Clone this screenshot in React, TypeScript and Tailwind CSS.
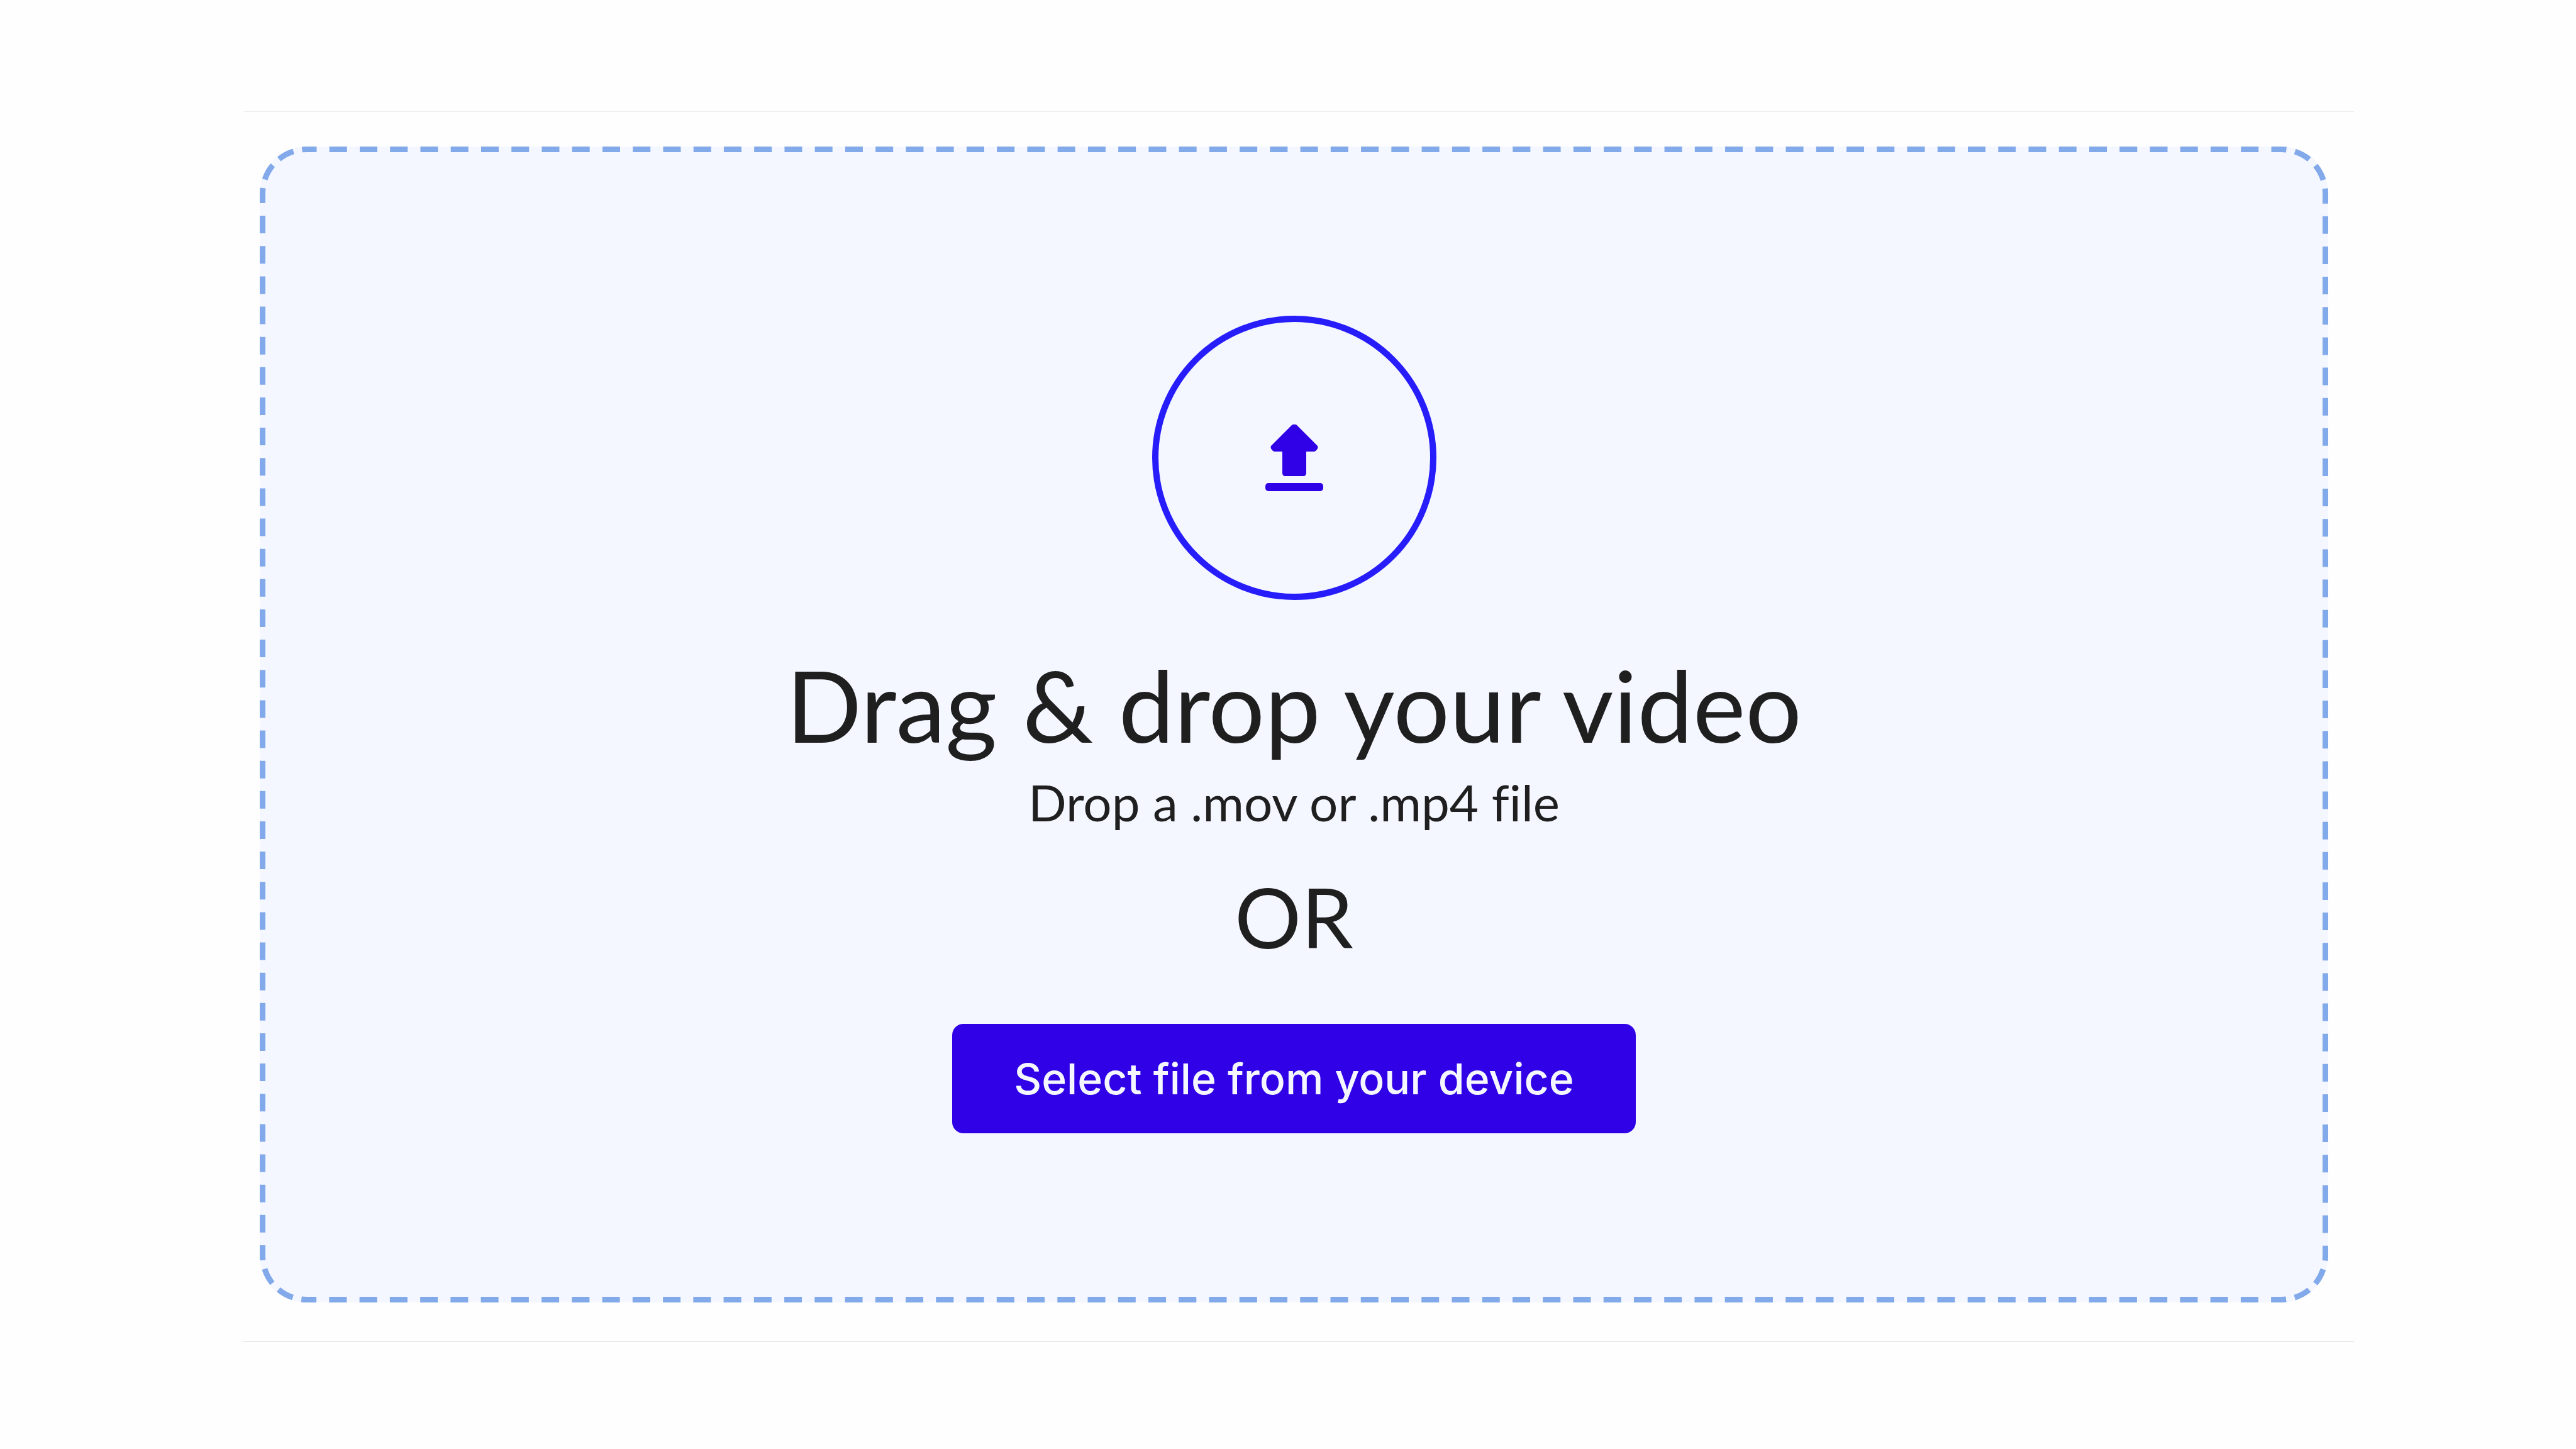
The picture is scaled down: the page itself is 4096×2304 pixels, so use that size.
import { useLayoutEffect, useRef, useState } from 'react';

const STROKE = 9;
const RADIUS = 70;
const DASH = 28;
const PITCH = 48;
/** How far the first and last dash of an edge reach into the corner arcs. */
const REACH = 8;
/** The dashes next to a corner are shorter than the others by this much. */
const TRIM = 4;

/** Dash list for one straight edge: whole dashes that end evenly at both corners. */
function edgeDashes(length: number): number[] {
  const span = length + (REACH + TRIM) * 2;
  const count = Math.max(1, Math.round((span - DASH) / PITCH));
  const gap = (span - DASH) / count - DASH;
  const list: number[] = [DASH - TRIM, gap];
  for (let i = 1; i < count; i++) list.push(DASH, gap);
  list.push(DASH - TRIM);
  return list;
}

/** Two short dashes round each corner. */
function cornerDashes(): number[] {
  const arc = (Math.PI * RADIUS) / 2 - REACH * 2;
  const dash = 26;
  const gap = (arc - dash * 2) / 3;
  return [gap, dash, gap, dash, gap];
}

function DashedOutline() {
  const ref = useRef<SVGSVGElement>(null);
  const [size, setSize] = useState({ w: 0, h: 0 });

  useLayoutEffect(() => {
    const el = ref.current;
    if (!el) return;
    const measure = () => {
      const box = el.getBoundingClientRect();
      setSize({ w: box.width, h: box.height });
    };
    measure();
    const observer = new ResizeObserver(measure);
    observer.observe(el);
    return () => observer.disconnect();
  }, []);

  const w = Math.max(0, size.w - STROKE);
  const h = Math.max(0, size.h - STROKE);
  const across = Math.max(0, w - RADIUS * 2);
  const down = Math.max(0, h - RADIUS * 2);
  const dashes = [across, down, across, down].flatMap((length) => [
    ...edgeDashes(length),
    ...cornerDashes(),
  ]);

  return (
    <svg ref={ref} className="pointer-events-none absolute inset-0 h-full w-full" aria-hidden="true">
      {size.w > 0 && (
        <rect
          x={STROKE / 2}
          y={STROKE / 2}
          width={w}
          height={h}
          rx={RADIUS}
          fill="none"
          stroke="#82a9ea"
          strokeWidth={STROKE}
          strokeDasharray={dashes.join(' ')}
          strokeDashoffset={REACH}
        />
      )}
    </svg>
  );
}

function UploadIcon() {
  return (
    <svg className="h-[108px] w-[96px]" viewBox="0 0 96 108" fill="#3000e6" aria-hidden="true">
      <path d="M44.500 1.500Q48 0 51.500 1.500L84.500 34.500Q86.500 37 84.500 40Q82 44 79 44H67V79Q66 83 63 83H33Q30 83 29 79V44H17Q14 44 11.500 40Q9.500 37 11.500 34.500Z" />
      <rect x="2" y="94" width="92" height="13" rx="5" />
    </svg>
  );
}

export default function App() {
  return (
    <main className="min-h-screen bg-[#fefefe] pt-[177px] pr-[353px] pl-[387px] font-['Lato','Open_Sans',sans-serif] text-[#1f1f1f]">
      <section className="border-t border-b border-t-[#ebebeb] border-b-[#dadada] pt-[55px] pr-[41px] pb-[62px] pl-[26px]">
        <div className="relative flex flex-col items-center rounded-[74px] bg-[#f4f7ff] py-[269px] text-center">
          <DashedOutline />
          <div className="flex size-[452px] items-center justify-center rounded-full border-[10px] border-[#271dfb]">
            <UploadIcon />
          </div>
          <h1 className="mt-[71px] text-[158px] leading-[190px]">Drag &amp; drop your video</h1>
          <p className="mt-3 text-[80px] leading-[96px] [font-variant-ligatures:none]">Drop a .mov or .mp4 file</p>
          <p className="mt-[55px] text-[132px] leading-[158px]">OR</p>
          <button
            type="button"
            className="mt-[92px] h-[174px] cursor-pointer rounded-[18px] bg-[#3000e6] px-[98px] font-['Inter','Open_Sans',sans-serif] text-[68px] font-medium text-[#f4f7ff]"
          >
            Select file from your device
          </button>
        </div>
      </section>
    </main>
  );
}
